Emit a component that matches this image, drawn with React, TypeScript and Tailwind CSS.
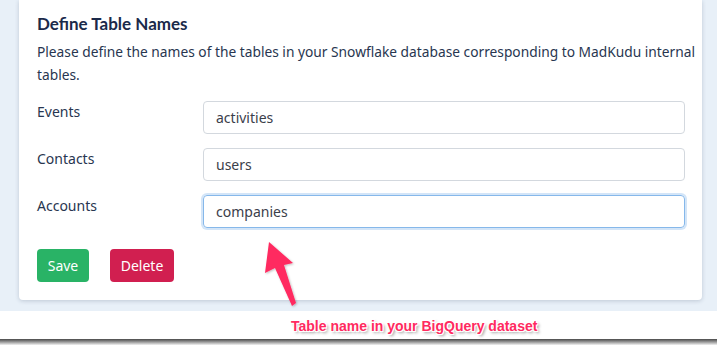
import React from "react";

const rows = [
  { label: "Events", value: "activities", focused: false },
  { label: "Contacts", value: "users", focused: false },
  { label: "Accounts", value: "companies", focused: true },
];

export default function App() {
  return (
    <div className="relative h-[348px] w-[717px] overflow-hidden bg-white font-['Noto_Sans',sans-serif]">
      <div className="flex h-[311px] bg-[#e8f0f8] pl-[19px] pr-[15px] pb-[11px]">
        <div className="flex w-full flex-col rounded-b-[4px] bg-white pl-[18px] pr-[17px] shadow-[0_1px_4px_rgba(40,60,90,0.22)]">
          <h2 className="mt-[10px] font-['Lato',sans-serif] text-[17px] leading-[28px] font-bold text-[#1b2a4a]">
            Define Table Names
          </h2>
          <p className="mt-[3px] mr-[-14px] whitespace-nowrap text-[13.75px] leading-[22.5px] text-[#283650]">
            Please define the names of the tables in your Snowflake database corresponding to MadKudu internal
            <br />
            tables.
          </p>
          <div className="mt-[15px] flex flex-col gap-[14px]">
            {rows.map((row) => (
              <div key={row.label} className="flex items-start">
                <label className="w-[166px] pt-[1px] text-[14px] leading-[20px] text-[#283650]">
                  {row.label}
                </label>
                <div
                  className={
                    row.focused
                      ? "flex h-[33px] flex-1 items-center rounded-[4px] border border-[#86b8ea] pl-[12px] text-[14px] text-[#3b404a] shadow-[0_0_0_2px_rgba(130,180,235,0.35)]"
                      : "flex h-[33px] flex-1 items-center rounded-[4px] border border-[#d3d8de] pl-[12px] text-[14px] text-[#3b404a]"
                  }
                >
                  {row.value}
                </div>
              </div>
            ))}
          </div>
          <div className="mt-[21px] flex gap-[21px]">
            <button className="h-[33px] w-[52px] rounded-[4px] bg-[#29b366] text-[14px] text-white">
              Save
            </button>
            <button className="h-[33px] w-[64px] rounded-[4px] bg-[#d11f50] text-[14px] text-white">
              Delete
            </button>
          </div>
        </div>
      </div>

      <div className="mt-[28px] h-[6px] bg-gradient-to-b from-[#4a4a4a] via-[#9a9a9a] to-[#f2f2f2]" />

      <svg className="absolute left-0 top-0" width="717" height="348" viewBox="0 0 717 348">
        <defs>
          <filter id="sh" x="-20%" y="-20%" width="140%" height="140%">
            <feDropShadow dx="1" dy="1" stdDeviation="1.2" floodColor="#000" floodOpacity="0.25" />
          </filter>
        </defs>
        <polygon
          points="269,242 293,263 284,265 296,303 292,306 275,268 265,273"
          fill="#ff2a60"
          filter="url(#sh)"
        />
      </svg>

      <div className="absolute left-[291px] top-[316px] font-['Liberation_Sans',sans-serif] text-[14px] leading-[20px] font-bold text-[#ff2a60] [text-shadow:1px_1px_0_#fff,-1px_-1px_0_#fff,1px_-1px_0_#fff,-1px_1px_0_#fff,2px_2px_3px_rgba(0,0,0,0.45)]">
        Table name in your BigQuery dataset
      </div>
    </div>
  );
}
